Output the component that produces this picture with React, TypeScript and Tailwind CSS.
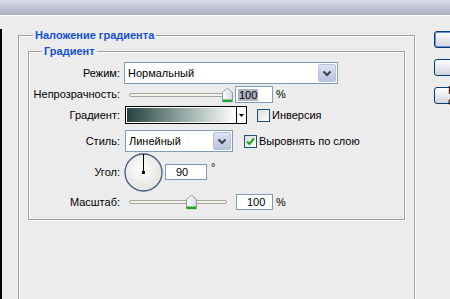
import type { ReactNode } from 'react';

const FONT = "font-['Liberation_Sans','Noto_Sans',sans-serif]";

function ComboArrow() {
  return (
    <div className="mr-[1px] flex h-[18px] w-[18px] shrink-0 items-center justify-center rounded-[2px] border border-[#B7C3DE] bg-gradient-to-b from-[#DDE3F3] to-[#B9C3DC]">
      <svg width="10" height="7" viewBox="0 0 10 7">
        <path d="M1.5 1.5 L5 5 L8.5 1.5" fill="none" stroke="#3A3F4A" strokeWidth="2" />
      </svg>
    </div>
  );
}

function Combo({ value, className }: { value: string; className: string }) {
  return (
    <div className={`flex h-[22px] items-center justify-between border border-[#7F9DB9] bg-white ${className}`}>
      <span className="pl-[3px] text-[11px] leading-none text-black">{value}</span>
      <ComboArrow />
    </div>
  );
}

function Thumb() {
  return (
    <svg width="11" height="15" viewBox="0 0 11 15">
      <defs>
        <linearGradient id="tg" x1="0" y1="0" x2="1" y2="0">
          <stop offset="0" stopColor="#FFFFFF" />
          <stop offset="1" stopColor="#D5D8DE" />
        </linearGradient>
      </defs>
      <path d="M0.5 5 L5.5 0.5 L10.5 5 V14.5 H0.5 Z" fill="url(#tg)" stroke="#8C97A8" />
      <rect x="1" y="12" width="9" height="2.5" fill="#22A62A" />
      <rect x="1" y="11.5" width="9" height="1" fill="#7ED07F" />
    </svg>
  );
}

function Slider({ width, trackWidth, pos }: { width: string; trackWidth: string; pos: string }) {
  return (
    <div className={`relative h-full shrink-0 ${width}`}>
      <div className={`absolute left-0 top-1/2 h-[4px] -translate-y-1/2 rounded-full border border-[#A6A69C] bg-[#F4F4EE] ${trackWidth}`} />
      <div className={`absolute top-1/2 -translate-y-1/2 ${pos}`}>
        <Thumb />
      </div>
    </div>
  );
}

function Checkbox({ checked }: { checked?: boolean }) {
  return (
    <div className="flex h-[13px] w-[13px] shrink-0 items-center justify-center border border-[#1C5180] bg-gradient-to-br from-[#DCDCD7] to-[#FFFFFF]">
      {checked && (
        <svg width="9" height="9" viewBox="0 0 9 9">
          <path d="M1 4.5 L3.5 7 L8 1.5" fill="none" stroke="#21A121" strokeWidth="2" />
        </svg>
      )}
    </div>
  );
}

function Row({ label, className, children }: { label: string; className: string; children: ReactNode }) {
  return (
    <div className={`flex items-center ${className}`}>
      <div className="w-[91px] shrink-0 text-right text-[11px] leading-none text-black">{label}</div>
      {children}
    </div>
  );
}

function Dial() {
  return (
    <svg width="39" height="39" viewBox="0 0 39 39">
      <defs>
        <radialGradient id="dg" cx="0.45" cy="0.4" r="0.6">
          <stop offset="0" stopColor="#FFFFFF" />
          <stop offset="1" stopColor="#E2E2DE" />
        </radialGradient>
      </defs>
      <circle cx="19.5" cy="19.5" r="18.5" fill="url(#dg)" stroke="#4A5884" strokeWidth="1.3" />
      <line x1="19.5" y1="19.5" x2="19.5" y2="1" stroke="#000" strokeWidth="1" />
      <rect x="18" y="18" width="3" height="3" fill="#000" />
    </svg>
  );
}

function SideButton({ text, primary }: { text?: string; primary?: boolean }) {
  return (
    <div
      className={`flex h-[17px] w-[80px] items-center rounded-[3px] border border-[#003C74] bg-gradient-to-b from-[#FFFFFF] to-[#D3D2E0] pl-[13px] text-[11px] leading-none text-black ${
        primary ? 'shadow-[inset_0_0_0_1px_#6C8FD9]' : ''
      }`}
    >
      {text}
    </div>
  );
}

// group box title sits on the top border line
function GroupTitle({ text, offset }: { text: string; offset: string }) {
  return (
    <div
      className={`-mt-[8px] w-fit bg-[#ECECEC] px-[2px] text-[11px] font-bold leading-[14px] text-[#1450D2] ${offset}`}
    >
      {text}
    </div>
  );
}

export default function App() {
  return (
    <div className={`flex h-[299px] w-[450px] flex-col overflow-hidden bg-[#ECECEC] ${FONT}`}>
      <div className="h-[16px] shrink-0 border-b border-white bg-gradient-to-b from-[#DCDEE8] to-[#A8ACC1]" />

      <div className="flex flex-1">
        <div className="w-[18px] shrink-0">
          <div className="mt-[13px] h-full w-[2px] bg-black" />
        </div>

        {/* Наложение градиента */}
        <div className="mt-[19px] h-[300px] w-[397px] shrink-0 border border-[#A0A0A0] px-[9px] shadow-[inset_1px_1px_0_#fff,1px_1px_0_#fff]">
          <GroupTitle text="Наложение градиента" offset="ml-[5px]" />

          {/* Градиент */}
          <div className="mt-[9px] border border-[#A0A0A0] pb-[9px] shadow-[inset_1px_1px_0_#fff,1px_1px_0_#fff]">
            <GroupTitle text="Градиент" offset="ml-[13px]" />

            <Row label="Режим:" className="mt-[4px] h-[22px]">
              <Combo value="Нормальный" className="ml-[4px] w-[214px]" />
            </Row>

            <Row label="Непрозрачность:" className="mt-[2px] h-[17px]">
              <Slider width="ml-[9px] w-[103px]" trackWidth="w-[99px]" pos="left-[93px]" />
              <div className="ml-[3px] flex h-[17px] w-[38px] items-center border border-[#7F9DB9] bg-white pl-[2px]">
                <span className="bg-[#AFB4C4] px-[1px] text-[11px] leading-[12px] text-black">100</span>
              </div>
              <span className="ml-[3px] text-[11px] leading-none">%</span>
            </Row>

            <Row label="Градиент:" className="mt-[3px] h-[18px]">
              <div className="ml-[5px] flex h-[18px] w-[122px] border border-black">
                <div className="h-full flex-1 border border-white bg-gradient-to-r from-[#25433F] via-[#8FA5A1] to-[#FFFFFF]" />
                <div className="flex w-[10px] items-center justify-center border-l border-black bg-white">
                  <svg width="5" height="3" viewBox="0 0 5 3">
                    <path d="M0 0 H5 L2.5 3 Z" fill="#000" />
                  </svg>
                </div>
              </div>
              <div className="ml-[10px]">
                <Checkbox />
              </div>
              <span className="ml-[2px] text-[11px] leading-none">Инверсия</span>
            </Row>

            <Row label="Стиль:" className="mt-[6px] h-[22px]">
              <Combo value="Линейный" className="ml-[5px] w-[108px]" />
              <div className="ml-[11px]">
                <Checkbox checked />
              </div>
              <span className="ml-[2px] text-[11px] leading-none">Выровнять по слою</span>
            </Row>

            <Row label="Угол:" className="mt-[1px] h-[38px]">
              <div className="ml-[4px] flex">
                <Dial />
              </div>
              <div className="ml-[2px] flex h-[16px] w-[42px] items-center border border-[#7F9DB9] bg-white pl-[10px] text-[11px] leading-none">
                90
              </div>
              <span className="mb-[9px] ml-[4px] text-[11px] leading-none">°</span>
            </Row>

            <Row label="Масштаб:" className="mt-[3px] h-[16px]">
              <Slider width="ml-[9px] w-[107px]" trackWidth="w-[98px]" pos="left-[57px]" />
              <div className="flex h-[16px] w-[37px] items-center border border-[#7F9DB9] bg-white pl-[10px] text-[11px] leading-none">
                100
              </div>
              <span className="ml-[3px] text-[11px] leading-none">%</span>
            </Row>
          </div>
        </div>

        <div className="ml-[19px] mt-[15px] flex shrink-0 flex-col gap-[11px]">
          <SideButton primary />
          <SideButton />
          <SideButton text="Новый стиль..." />
        </div>
      </div>
    </div>
  );
}
